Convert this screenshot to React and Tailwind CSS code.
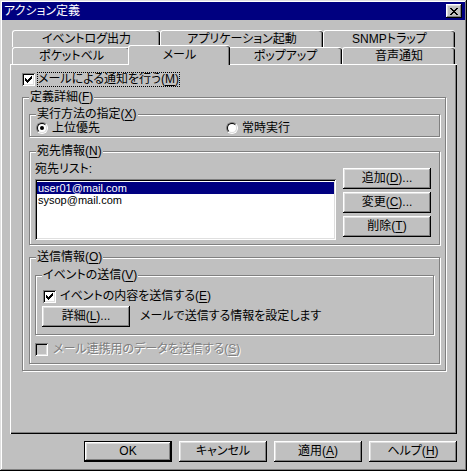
const RAISED =
  "shadow-[inset_-1px_-1px_#000,inset_1px_1px_#fff,inset_-2px_-2px_#808080,inset_2px_2px_#dfdfdf]";
const SUNKEN =
  "shadow-[inset_1px_1px_#808080,inset_-1px_-1px_#fff,inset_2px_2px_#000,inset_-2px_-2px_#dfdfdf]";

const CLOSE_X = ["##....##", ".##..##.", "..####..", "...##...", "..####..", ".##..##.", "##....##"];
const CHECK = ["......#", ".....##", "#...###", "##.###.", "#####..", ".###...", "..#...."];

function Pixels({ rows }) {
  const w = rows[0].length;
  const h = rows.length;
  return (
    <svg width={w} height={h} viewBox={`0 0 ${w} ${h}`} shapeRendering="crispEdges">
      {rows.flatMap((row, y) =>
        row.split("").map((c, x) =>
          c === "#" ? <rect key={`${x}-${y}`} x={x} y={y} width="1" height="1" fill="#000" /> : null
        )
      )}
    </svg>
  );
}

function Key({ children }) {
  return <span className="underline underline-offset-[2px]">{children}</span>;
}

function Button({ children, isDefault = false, className = "" }) {
  return (
    <button
      type="button"
      className={`h-[21px] w-[88px] shrink-0 bg-[#c0c0c0] leading-[13px] text-black ${isDefault ? "border border-black" : ""} ${className}`}
    >
      <span className={`flex h-full w-full items-center justify-center ${RAISED}`}>{children}</span>
    </button>
  );
}

function Checkbox({ checked, disabled }) {
  return (
    <span
      className={`flex h-[13px] w-[13px] shrink-0 items-center justify-center ${disabled ? "bg-[#c0c0c0]" : "bg-white"} ${SUNKEN}`}
    >
      {checked && <Pixels rows={CHECK} />}
    </span>
  );
}

function Radio({ checked }) {
  return (
    <span className="h-[12px] w-[12px] shrink-0 rounded-full border border-t-[#808080] border-r-white border-b-white border-l-[#808080]">
      <span className="flex h-full w-full items-center justify-center rounded-full border border-t-black border-r-[#dfdfdf] border-b-[#dfdfdf] border-l-black bg-white">
        {checked && <span className="h-[4px] w-[4px] rounded-full bg-black" />}
      </span>
    </span>
  );
}

function Group({ label, className = "", children }) {
  return (
    <div className={`relative border border-[#808080] shadow-[inset_1px_1px_0_#fff,1px_1px_0_#fff] ${className}`}>
      <span className="absolute top-[-7px] left-[6px] bg-[#c0c0c0] px-[1px] leading-[13px]">{label}</span>
      {children}
    </div>
  );
}

function Tab({ children, className = "" }) {
  return (
    <div
      className={`flex shrink-0 items-center justify-center rounded-t-[3px] border-t border-l border-white shadow-[inset_-1px_0_0_#000,inset_-2px_0_0_#808080] ${className}`}
    >
      {children}
    </div>
  );
}

export default function App() {
  return (
    <div className="h-[471px] w-[467px] bg-[#c0c0c0] font-['Liberation_Sans','Noto_Sans_CJK_JP',sans-serif] text-[12px] text-black [font-feature-settings:'palt']">
      <div className="flex h-full flex-col p-[2px] shadow-[inset_-1px_-1px_#000,inset_1px_1px_#dfdfdf,inset_-2px_-2px_#808080,inset_2px_2px_#fff]">
        {/* title bar */}
        <div className="flex h-[18px] shrink-0 items-center justify-between bg-[#000080] pr-[3px] pl-[2px]">
          <span className="leading-[13px] text-white">アクション定義</span>
          <span className={`flex h-[14px] w-[16px] items-center justify-center bg-[#c0c0c0] ${RAISED}`}>
            <Pixels rows={CLOSE_X} />
          </span>
        </div>

        <div className="mx-[8px] mt-[10px]">
          {/* back row of tabs */}
          <div className="flex h-[17px] pl-[2px]">
            <Tab className="w-[148px]">イベントログ出力</Tab>
            <Tab className="w-[163px]">アプリケーション起動</Tab>
            <Tab className="w-[132px]">SNMPトラップ</Tab>
          </div>
          {/* front row, with the selected tab */}
          <div className="flex h-[17px] pl-[2px]">
            <Tab className="w-[118px]">ポケットベル</Tab>
            <Tab className="relative z-10 -mx-[2px] -mt-[2px] h-[20px] w-[102px] bg-[#c0c0c0] pb-[2px]">メール</Tab>
            <Tab className="w-[114px]">ポップアップ</Tab>
            <Tab className="w-[113px]">音声通知</Tab>
          </div>

          <div className="h-[370px] bg-[#c0c0c0] pt-[8px] pl-[12px] shadow-[inset_1px_1px_#fff,inset_-1px_-1px_#000,inset_-2px_-2px_#808080]">
            <div className="flex h-[15px] items-center">
              <Checkbox checked />
              <span className="ml-[2px] border border-dotted border-black leading-[13px]">
                メールによる通知を行う(<Key>M</Key>)
              </span>
            </div>

            <Group
              label={<>定義詳細(<Key>F</Key>)</>}
              className="mt-[10px] h-[274px] w-[424px] pt-[16px] pl-[6px]"
            >
              <Group label={<>実行方法の指定(<Key>X</Key>)</>} className="h-[23px] w-[411px] pt-[7px] pl-[6px]">
                <div className="flex h-[12px] items-center">
                  <label className="flex w-[190px] items-center gap-[4px] leading-[13px]">
                    <Radio checked />
                    上位優先
                  </label>
                  <label className="flex items-center gap-[4px] leading-[13px]">
                    <Radio />
                    常時実行
                  </label>
                </div>
              </Group>

              <Group label={<>宛先情報(<Key>N</Key>)</>} className="mt-[14px] h-[94px] w-[411px]">
                <div className="flex items-start">
                  <div className="mt-[11px] ml-[5px]">
                    <p className="leading-[12px]">宛先リスト:</p>
                    <div className={`mt-[4px] h-[61px] w-[301px] bg-white px-[2px] pt-[3px] text-[11px] ${SUNKEN}`}>
                      <div className="h-[12px] overflow-hidden bg-[#000080] pl-[1px] leading-[12px] text-white">user01@mail.com</div>
                      <div className="h-[12px] overflow-hidden pl-[1px] leading-[12px]">sysop@mail.com</div>
                    </div>
                  </div>
                  <div className="mt-[16px] ml-[7px] flex flex-col gap-[3px]">
                    <Button>
                      追加(<Key>D</Key>)...
                    </Button>
                    <Button>
                      変更(<Key>C</Key>)...
                    </Button>
                    <Button>
                      削除(<Key>T</Key>)
                    </Button>
                  </div>
                </div>
              </Group>

              <Group label={<>送信情報(<Key>O</Key>)</>} className="mt-[12px] h-[107px] w-[411px]">
                <Group label={<>イベントの送信(<Key>V</Key>)</>} className="mt-[17px] ml-[5px] h-[60px] w-[399px]">
                  <div className="mt-[14px] ml-[7px] flex h-[13px] items-center">
                    <Checkbox checked />
                    <span className="ml-[4px] leading-[13px]">
                      イベントの内容を送信する(<Key>E</Key>)
                    </span>
                  </div>
                  <div className="mt-[3px] ml-[6px] flex items-center">
                    <Button>
                      詳細(<Key>L</Key>)...
                    </Button>
                    <span className="ml-[10px] leading-[13px]">メールで送信する情報を設定します</span>
                  </div>
                </Group>
                <div className="mt-[8px] ml-[5px] flex h-[13px] items-center">
                  <Checkbox disabled />
                  <span className="ml-[5px] leading-[13px] text-[#808080] [text-shadow:1px_1px_0_#fff]">
                    メール連携用のデータを送信する(<Key>S</Key>)
                  </span>
                </div>
              </Group>
            </Group>
          </div>

          <div className="mt-[7px] flex justify-end gap-[7px]">
            <Button isDefault>OK</Button>
            <Button>キャンセル</Button>
            <Button>
              適用(<Key>A</Key>)
            </Button>
            <Button>
              ヘルプ(<Key>H</Key>)
            </Button>
          </div>
        </div>
      </div>
    </div>
  );
}
